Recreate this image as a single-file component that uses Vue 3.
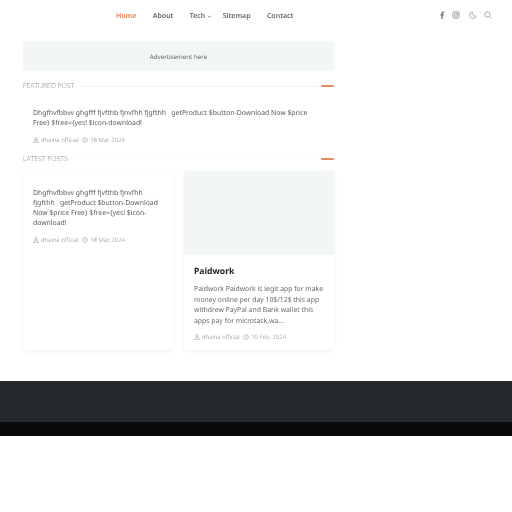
<script setup>
const nav = [
  { label: 'Home', active: true },
  { label: 'About' },
  { label: 'Tech', caret: true },
  { label: 'Sitemap' },
  { label: 'Contact' },
]
const longTitle = 'Dhgfhvfbbvv ghgfff fjvfthb fjnvfhh fjgfthh \u00a0\u00a0getProduct $button-Download Now $price Free} $free={yes! $icon-download!'
</script>

<template>
  <div class="page">
    <header class="topbar">
      <nav class="nav">
        <a v-for="n in nav" :key="n.label" class="nav-item" :class="{ active: n.active, tech: n.caret }">
          {{ n.label }}
          <svg v-if="n.caret" class="caret" viewBox="0 0 6 6" width="5" height="5"><path d="M1 2l2 2 2-2" fill="none" stroke="#777" stroke-width="1"/></svg>
        </a>
      </nav>
      <div class="tools">
        <svg viewBox="0 0 10 10" width="8" height="8"><path d="M6 10V5.600h1.500L7.800 4H6V3c0-.5.2-.8.8-.8h1V.7C7.500.6 7.100.6 6.600.6 5.200.6 4.300 1.400 4.300 2.800V4H2.800v1.600h1.500V10z" fill="#777"/></svg>
        <svg viewBox="0 0 10 10" width="8" height="8" fill="none" stroke="#777" stroke-width=".9"><rect x="1" y="1" width="8" height="8" rx="2"/><circle cx="5" cy="5" r="1.900"/><circle cx="7.200" cy="2.800" r=".3"/></svg>
        <svg class="moon" viewBox="0 0 10 10" width="8" height="8" fill="none" stroke="#888" stroke-width=".8"><path d="M4.300 1a4.200 4.200 0 1 0 4.700 5.200A4 4 0 0 1 4.300 1z"/></svg>
        <svg viewBox="0 0 10 10" width="8" height="8" fill="none" stroke="#888" stroke-width=".9"><circle cx="4.300" cy="4.300" r="3.300"/><path d="M6.800 6.800L9.500 9.500"/></svg>
      </div>
    </header>

    <main class="main">
      <div class="ad">Advertisement here</div>

      <div class="section-head">
        <span class="section-title">FEATURED POST</span>
        <span class="rule"></span>
        <span class="accent"></span>
      </div>

      <article class="featured">
        <p class="title-plain">{{ longTitle }}</p>
        <div class="meta">
          <svg class="mi" viewBox="0 0 10 10"><circle cx="5" cy="3" r="2"/><path d="M1 9.500c0-2.500 1.800-3.800 4-3.800s4 1.300 4 3.800z"/></svg>
          <span>dhaina official</span>
          <svg class="mi clock" viewBox="0 0 10 10"><circle cx="5" cy="5" r="4"/><path d="M5 2.800V5l1.600 1"/></svg>
          <span>18 Mar, 2024</span>
        </div>
      </article>

      <div class="section-head latest">
        <span class="section-title">LATEST POSTS</span>
        <span class="rule faint"></span>
        <span class="accent"></span>
      </div>

      <div class="grid">
        <article class="card">
          <div class="card-body first">
            <p class="title-plain">{{ longTitle }}</p>
            <div class="meta">
              <svg class="mi" viewBox="0 0 10 10"><circle cx="5" cy="3" r="2"/><path d="M1 9.500c0-2.500 1.800-3.800 4-3.800s4 1.300 4 3.800z"/></svg>
              <span>dhaina official</span>
              <svg class="mi clock" viewBox="0 0 10 10"><circle cx="5" cy="5" r="4"/><path d="M5 2.800V5l1.600 1"/></svg>
              <span>18 Mar, 2024</span>
            </div>
          </div>
        </article>
        <article class="card">
          <div class="thumb"></div>
          <div class="card-body">
            <h3 class="card-title">Paidwork</h3>
            <p class="excerpt">Paidwork Paidwork is legit app for make money online per day 10$/12$ this app withdrew PayPal and Bank wallet this apps pay for microtask,wa...</p>
            <div class="meta">
              <svg class="mi" viewBox="0 0 10 10"><circle cx="5" cy="3" r="2"/><path d="M1 9.500c0-2.500 1.800-3.800 4-3.800s4 1.300 4 3.800z"/></svg>
              <span>dhaina official</span>
              <svg class="mi clock" viewBox="0 0 10 10"><circle cx="5" cy="5" r="4"/><path d="M5 2.800V5l1.600 1"/></svg>
              <span>10 Feb, 2024</span>
            </div>
          </div>
        </article>
      </div>
    </main>

    <footer class="footer">
      <div class="footer-top"></div>
      <div class="footer-bottom"></div>
    </footer>
  </div>
</template>

<style>
html, body { margin: 0; background: #fff; }
</style>

<style scoped>
.page {
  width: 512px;
  height: 512px;
  overflow: hidden;
  font-family: "Noto Sans", sans-serif;
  text-rendering: geometricPrecision;
  filter: blur(.4px);
  color: #555;
  background: #fff;
  display: flex;
  flex-direction: column;
}
.topbar {
  box-sizing: border-box;
  height: 31px;
  display: flex;
  align-items: center;
  justify-content: space-between;
  padding: 1px 20px 0 116px;
}
.nav { display: flex; gap: 16.300px; }
.nav-item {
  font-size: 7px;
  font-weight: 600;
  color: #666;
  display: flex;
  align-items: center;
  gap: 2px;
}
.nav-item.active { color: #ee7a45; }
.nav-item.tech { margin-right: -6px; }
.tools { display: flex; align-items: center; gap: 5.500px; margin-top: -2px; }
.moon { margin-left: 4px; margin-right: 1.500px; }
.main {
  width: 311px;
  margin-left: 23px;
  padding-top: 11px;
}
.ad {
  height: 28px;
  background: #f3f6f6;
  box-shadow: 0 0 3px rgba(0, 0, 0, .04);
  font-size: 6.200px;
  color: #666;
  display: flex;
  align-items: center;
  justify-content: center;
}
.section-head {
  display: flex;
  align-items: center;
  margin-top: 9px;
  height: 14px;
}
.section-title {
  font-family: "Open Sans", sans-serif;
  font-size: 6.900px;
  font-weight: 300;
  color: #888;
  white-space: nowrap;
}
.rule {
  flex: 1;
  height: 1px;
  background: #f0f0f0;
  margin-left: 6px;
}
.rule.faint { background: #fafafa; }
.accent {
  width: 13px;
  height: 2px;
  background: #e58a62;
  border-radius: 1px;
}
.featured { padding: 16px 10px 0; }
.title-plain {
  margin: 0;
  font-size: 6.850px;
  line-height: 10.100px;
  color: #5c5c5c;
}
.meta {
  display: flex;
  align-items: center;
  gap: 2px;
  font-size: 6px;
  font-weight: 300;
  color: #8a8a8a;
  margin-top: 6px;
  height: 9px;
}
.mi {
  width: 6px;
  height: 6px;
  fill: none;
  stroke: #888;
  stroke-width: .8;
  flex: none;
}
.clock { margin-left: 1.500px; }
.section-head.latest { margin-top: 8px; }
.grid {
  display: grid;
  grid-template-columns: 150px 150px;
  gap: 11px;
  margin-top: 5px;
}
.card {
  height: 179px;
  background: #fff;
  box-shadow: 0 1px 4px rgba(0, 0, 0, .07);
  border-radius: 2px;
  overflow: hidden;
}
.thumb { height: 84px; background: #f3f6f6; }
.card-body { padding: 10px 8px 0 10px; }
.card-body.first { padding-top: 18px; }
.card-title {
  margin: 0 0 7px;
  font-size: 8.600px;
  line-height: 13px;
  font-weight: 700;
  color: #1f1f1f;
}
.excerpt {
  margin: 0 0 -1px;
  font-size: 6.850px;
  line-height: 10.500px;
  color: #6a6a6a;
}
.footer { margin-top: 31px; }
.footer-top { height: 41px; background: #26292b; }
.footer-bottom { height: 14px; background: #0a0a0c; }
</style>
